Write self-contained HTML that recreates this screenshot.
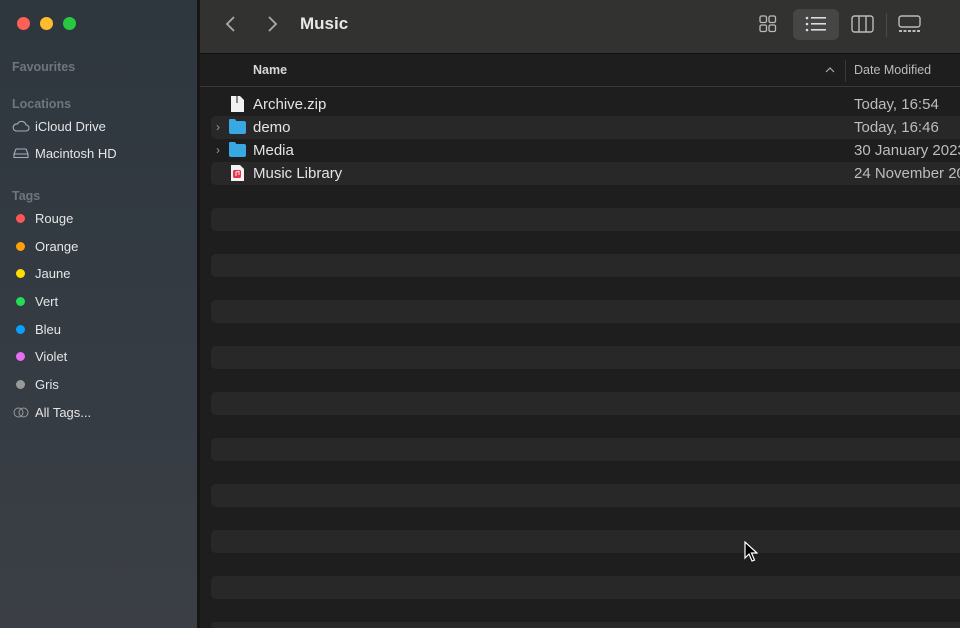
<!DOCTYPE html>
<html><head><meta charset="utf-8"><style>
*{margin:0;padding:0;box-sizing:border-box}
html,body{width:960px;height:628px;overflow:hidden}
body{background:#1e1e1e;font-family:"Liberation Sans",sans-serif}
#wrap{position:relative;width:960px;height:628px;overflow:hidden;background:#1e1e1e}
#side{position:absolute;left:0;top:0;width:198px;height:628px;background:linear-gradient(180deg,#2e363e 0%,#343b43 50%,#3b3f45 100%)}
#sep{position:absolute;left:197px;top:0;width:3px;height:628px;background:#151515}
.dot{position:absolute;top:17px;width:13px;height:13px;border-radius:50%}
.sh{position:absolute;left:12px;font-size:12.5px;font-weight:bold;color:#6f767d}
.si{position:absolute;left:35px;font-size:13px;color:#e6e6e6}
.tg{position:absolute;left:16px;width:9px;height:9px;border-radius:50%}
#tb{position:absolute;left:200px;top:0;width:760px;height:54px;background:#323230;border-bottom:1px solid #111}
#hdr{position:absolute;left:200px;top:54px;width:760px;height:33px;background:#1e1e1e;border-bottom:1px solid #3a3a3a}
.stripe{position:absolute;left:211px;width:760px;height:23px;background:#282828;border-radius:5px}
.nm{position:absolute;left:253px;font-size:15px;color:#e4e4e4}
.dt{position:absolute;left:854px;font-size:15px;color:#bdbdbd;white-space:nowrap}
.chev{position:absolute;left:216px;color:#999;font-size:12px}
.fold{position:absolute;left:229px;width:17px;height:13px;background:#38a8e3;border-radius:2px}
.fold:before{content:"";position:absolute;left:0;top:-2px;width:7px;height:3px;background:#38a8e3;border-radius:1px 2px 0 0}
</style></head><body><div id="wrap">
<div id="side">
<div class="dot" style="left:17px;background:#fe5f57"></div>
<div class="dot" style="left:40px;background:#febc2e"></div>
<div class="dot" style="left:63px;background:#28c840"></div>
<div class="sh" style="top:60px">Favourites</div>
<div class="sh" style="top:97px">Locations</div>
<svg style="position:absolute;left:12px;top:119px" width="18" height="14" viewBox="0 0 18 14"><path d="M4 12h10a3 3 0 0 0 0-6 4.5 4.5 0 0 0-8.5-1A3.5 3.5 0 0 0 4 12z" fill="none" stroke="#aab" stroke-width="1.1"/></svg>
<div class="si" style="top:119px">iCloud Drive</div>
<svg style="position:absolute;left:13px;top:147px" width="16" height="12" viewBox="0 0 16 12"><path d="M1 7l2-5h10l2 5v3.5H1z M1 7h14" fill="none" stroke="#aab" stroke-width="1.1"/></svg>
<div class="si" style="top:146px">Macintosh HD</div>
<div class="sh" style="top:189px">Tags</div>
<div class="tg" style="top:214px;background:#f55"></div><div class="si" style="top:211px">Rouge</div>
<div class="tg" style="top:242px;background:#ff9f0a"></div><div class="si" style="top:239px">Orange</div>
<div class="tg" style="top:269px;background:#fd0"></div><div class="si" style="top:266px">Jaune</div>
<div class="tg" style="top:297px;background:#2d5"></div><div class="si" style="top:294px">Vert</div>
<div class="tg" style="top:325px;background:#0a9eff"></div><div class="si" style="top:322px">Bleu</div>
<div class="tg" style="top:352px;background:#e76ef0"></div><div class="si" style="top:349px">Violet</div>
<div class="tg" style="top:380px;background:#999"></div><div class="si" style="top:377px">Gris</div>
<svg style="position:absolute;left:13px;top:407px" width="16" height="11"><circle cx="5.5" cy="5.5" r="4.5" fill="none" stroke="#999"/><circle cx="10.5" cy="5.5" r="4.5" fill="none" stroke="#999"/></svg>
<div class="si" style="top:405px">All Tags...</div>
</div>
<div id="sep"></div>
<div id="tb">
<svg style="position:absolute;left:25px;top:15px" width="12" height="18"><path d="M9 2L2 9l7 7" fill="none" stroke="#aaa" stroke-width="1.8"/></svg>
<svg style="position:absolute;left:66px;top:15px" width="12" height="18"><path d="M3 2l7 7-7 7" fill="none" stroke="#aaa" stroke-width="1.8"/></svg>
<div style="position:absolute;left:100px;top:14px;font-size:17px;font-weight:bold;color:#e8e8e8">Music</div>
<svg style="position:absolute;left:559px;top:15px" width="18" height="18"><g fill="none" stroke="#bbb" stroke-width="1.3"><rect x="1" y="1" width="6.5" height="6.5" rx="1.5"/><rect x="10" y="1" width="6.5" height="6.5" rx="1.5"/><rect x="1" y="10" width="6.5" height="6.5" rx="1.5"/><rect x="10" y="10" width="6.5" height="6.5" rx="1.5"/></g></svg>
<div style="position:absolute;left:593px;top:9px;width:46px;height:31px;background:#464646;border-radius:6px"></div>
<svg style="position:absolute;left:605px;top:16px" width="22" height="16"><g fill="#ddd"><circle cx="2" cy="2" r="1.3"/><circle cx="2" cy="8" r="1.3"/><circle cx="2" cy="14" r="1.3"/><rect x="6" y="1" width="15" height="1.6"/><rect x="6" y="7" width="15" height="1.6"/><rect x="6" y="13" width="15" height="1.6"/></g></svg>
<svg style="position:absolute;left:651px;top:15px" width="24" height="18"><g fill="none" stroke="#bbb" stroke-width="1.4"><rect x="1" y="1" width="21" height="16" rx="2.5"/><path d="M8 1v16M15 1v16"/></g></svg>
<div style="position:absolute;left:686px;top:13px;width:1px;height:24px;background:#4a4a4a"></div>
<svg style="position:absolute;left:698px;top:15px" width="24" height="18"><g fill="none" stroke="#bbb" stroke-width="1.4"><rect x="1" y="1" width="21" height="11" rx="2.5"/></g><g fill="#bbb"><rect x="1" y="15" width="3" height="2"/><rect x="5.5" y="15" width="3" height="2"/><rect x="10" y="15" width="3" height="2"/><rect x="14.5" y="15" width="3" height="2"/><rect x="19" y="15" width="3" height="2"/></g></svg>
</div>
<div id="hdr">
<div style="position:absolute;left:53px;top:9px;font-size:12.5px;font-weight:bold;color:#d8d8d8">Name</div>
<svg style="position:absolute;left:625px;top:13px" width="10" height="6"><path d="M1 5l4-4 4 4" fill="none" stroke="#aaa" stroke-width="1.2"/></svg>
<div style="position:absolute;left:645px;top:6px;width:1px;height:22px;background:#3a3a3a"></div>
<div style="position:absolute;left:654px;top:9px;font-size:12.5px;color:#bbb">Date Modified</div>
</div>
<div class="stripe" style="top:116px"></div>
<div class="stripe" style="top:162px"></div>
<div class="stripe" style="top:208px"></div>
<div class="stripe" style="top:254px"></div>
<div class="stripe" style="top:300px"></div>
<div class="stripe" style="top:346px"></div>
<div class="stripe" style="top:392px"></div>
<div class="stripe" style="top:438px"></div>
<div class="stripe" style="top:484px"></div>
<div class="stripe" style="top:530px"></div>
<div class="stripe" style="top:576px"></div>
<div class="stripe" style="top:622px;height:6px"></div>
<svg style="position:absolute;left:230px;top:95px" width="15" height="18"><path d="M1 1h9l4 4v12H1z" fill="#f2f2f2"/><rect x="6" y="1" width="2" height="7" fill="#888"/></svg>
<div class="nm" style="top:96px">Archive.zip</div>
<div class="chev" style="top:120px">&#x203A;</div>
<div class="fold" style="top:121px"></div>
<div class="nm" style="top:119px">demo</div>
<div class="chev" style="top:143px">&#x203A;</div>
<div class="fold" style="top:144px"></div>
<div class="nm" style="top:142px">Media</div>
<svg style="position:absolute;left:230px;top:164px" width="15" height="18"><path d="M1 1h9l4 4v12H1z" fill="#f2f2f2"/><rect x="3" y="6" width="8" height="8" rx="1.5" fill="#e8334a"/><path d="M6 12V8l3-.6v3.6" stroke="#fff" fill="none" stroke-width=".9"/></svg>
<div class="nm" style="top:165px">Music Library</div>
<div class="dt" style="top:96px">Today, 16:54</div>
<div class="dt" style="top:119px">Today, 16:46</div>
<div class="dt" style="top:142px">30 January 2023</div>
<div class="dt" style="top:165px">24 November 2022</div>
<svg style="position:absolute;left:744px;top:541px" width="14" height="22"><path d="M1 1v16l4-4 3 7 2.5-1-3-7h5.5z" fill="#000" stroke="#fff" stroke-width="1.2"/></svg>
</div></body></html>
